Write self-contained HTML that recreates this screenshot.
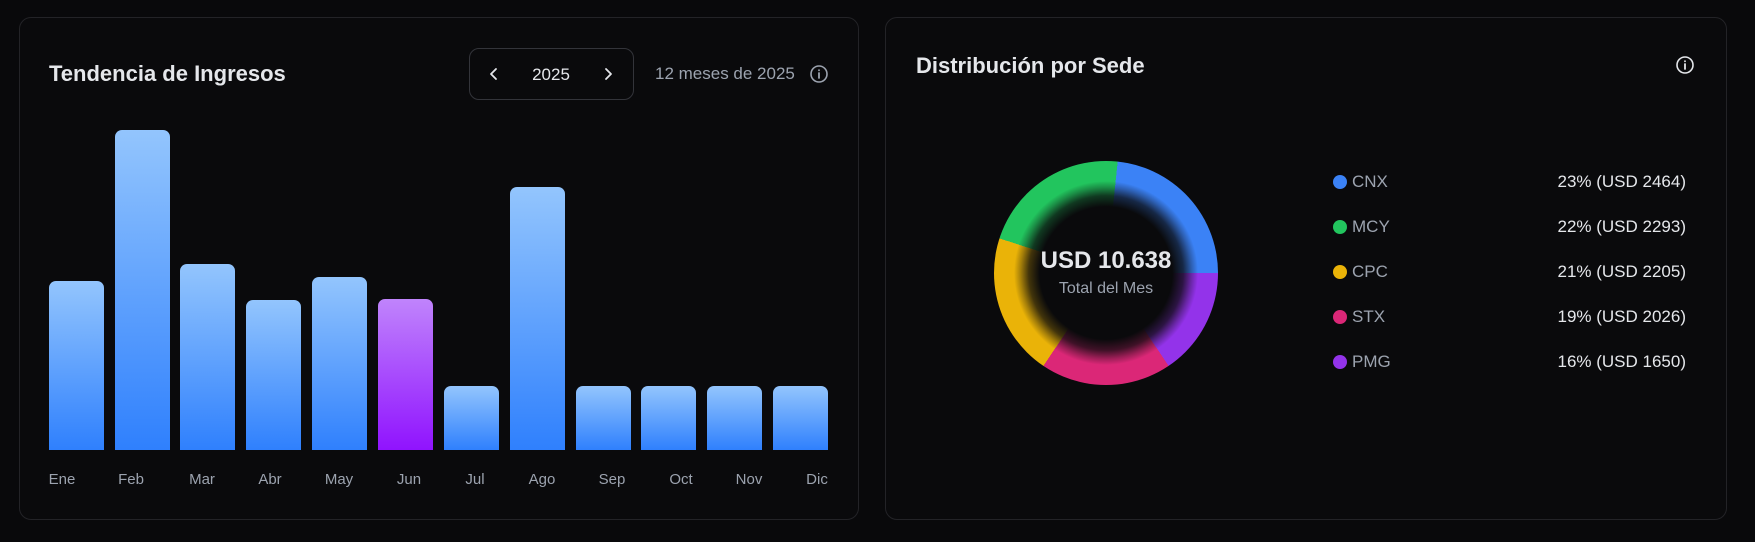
<!DOCTYPE html>
<html><head><meta charset="utf-8"><style>
*{box-sizing:border-box;margin:0;padding:0}
body{width:1755px;height:542px;background:#09090b;font-family:"Liberation Sans",sans-serif;position:relative;overflow:hidden;color:#e5e7eb}
.card{position:absolute;top:17px;height:503px;border:1px solid #232327;border-radius:12px;background:#0a0a0c}
.t{position:absolute;font-weight:bold;font-size:22px;color:#e5e7eb}
.bar{position:absolute;width:55px;border-radius:7px 7px 0 0;background:linear-gradient(#93c5fd,#2f80fd)}
.lbl{position:absolute;top:471px;font-size:15px;color:#9ca3af;width:60px;text-align:center}
.row{position:absolute;left:1333px;width:353px;height:20px;font-size:17px}
.dot{position:absolute;left:0;top:3px;width:14px;height:14px;border-radius:50%}
.nm{position:absolute;left:19px;top:0;color:#9ca3af}
.val{position:absolute;right:0;top:0;color:#e5e7eb}
</style></head><body>
<div class="card" style="left:19px;width:840px"></div>
<div class="t" style="left:49px;top:61px">Tendencia de Ingresos</div>
<div style="position:absolute;left:469px;top:48px;width:165px;height:52px;border:1px solid #33343a;border-radius:10px"></div>
<svg style="position:absolute;left:487px;top:66px" width="14" height="16" viewBox="0 0 14 16"><path d="M9 3 L4 8 L9 13" fill="none" stroke="#e5e7eb" stroke-width="1.8" stroke-linecap="round" stroke-linejoin="round"/></svg>
<svg style="position:absolute;left:601px;top:66px" width="14" height="16" viewBox="0 0 14 16"><path d="M5 3 L10 8 L5 13" fill="none" stroke="#e5e7eb" stroke-width="1.8" stroke-linecap="round" stroke-linejoin="round"/></svg>
<div style="position:absolute;left:520px;top:65px;width:62px;text-align:center;font-size:17px;color:#e5e7eb">2025</div>
<div style="position:absolute;left:655px;top:64px;font-size:17px;color:#9ca3af">12 meses de 2025</div>
<svg style="position:absolute;left:809px;top:64px" width="20" height="20" viewBox="0 0 20 20"><circle cx="10" cy="10" r="8" fill="none" stroke="#9ca3af" stroke-width="1.6"/><path d="M10 9v5M10 6.2v.2" stroke="#9ca3af" stroke-width="1.8" stroke-linecap="round"/></svg>

<div class="bar" style="left:49px;top:281px;height:169px"></div>
<div class="bar" style="left:115px;top:130px;height:320px"></div>
<div class="bar" style="left:180px;top:264px;height:186px"></div>
<div class="bar" style="left:246px;top:300px;height:150px"></div>
<div class="bar" style="left:312px;top:277px;height:173px"></div>
<div class="bar" style="left:378px;top:299px;height:151px;background:linear-gradient(#c084fc,#9013fe)"></div>
<div class="bar" style="left:444px;top:386px;height:64px"></div>
<div class="bar" style="left:510px;top:187px;height:263px"></div>
<div class="bar" style="left:576px;top:386px;height:64px"></div>
<div class="bar" style="left:641px;top:386px;height:64px"></div>
<div class="bar" style="left:707px;top:386px;height:64px"></div>
<div class="bar" style="left:773px;top:386px;height:64px"></div>

<div class="lbl" style="left:32px">Ene</div>
<div class="lbl" style="left:101px">Feb</div>
<div class="lbl" style="left:172px">Mar</div>
<div class="lbl" style="left:240px">Abr</div>
<div class="lbl" style="left:309px">May</div>
<div class="lbl" style="left:379px">Jun</div>
<div class="lbl" style="left:445px">Jul</div>
<div class="lbl" style="left:512px">Ago</div>
<div class="lbl" style="left:582px">Sep</div>
<div class="lbl" style="left:651px">Oct</div>
<div class="lbl" style="left:719px">Nov</div>
<div class="lbl" style="left:787px">Dic</div>

<div class="card" style="left:885px;width:842px"></div>
<div class="t" style="left:916px;top:53px">Distribución por Sede</div>
<svg style="position:absolute;left:1675px;top:55px" width="20" height="20" viewBox="0 0 20 20"><circle cx="10" cy="10" r="8" fill="none" stroke="#e5e7eb" stroke-width="1.6"/><path d="M10 9v5M10 6.2v.2" stroke="#e5e7eb" stroke-width="1.8" stroke-linecap="round"/></svg>

<div style="position:absolute;left:994px;top:161px;width:224px;height:224px;border-radius:50%;background:conic-gradient(from 6deg,#3b82f6 0 84deg,#9333ea 84deg 140deg,#db2777 140deg 208deg,#eab308 208deg 282deg,#22c55e 282deg 360deg)"></div>
<div style="position:absolute;left:1014px;top:181px;width:184px;height:184px;border-radius:50%;background:radial-gradient(circle closest-side,#0a0a0c 0,#0a0a0c 72%,rgba(10,10,12,0.75) 84%,rgba(10,10,12,0.3) 93%,rgba(10,10,12,0) 100%)"></div>
<div style="position:absolute;left:1006px;top:247px;width:200px;text-align:center;font-size:24px;font-weight:bold;color:#e5e7eb">USD 10.638</div>
<div style="position:absolute;left:1006px;top:280px;width:200px;text-align:center;font-size:16px;color:#9ca3af">Total del Mes</div>

<div class="row" style="top:172px"><span class="dot" style="background:#3b82f6"></span><span class="nm">CNX</span><span class="val">23% (USD 2464)</span></div>
<div class="row" style="top:217px"><span class="dot" style="background:#22c55e"></span><span class="nm">MCY</span><span class="val">22% (USD 2293)</span></div>
<div class="row" style="top:262px"><span class="dot" style="background:#eab308"></span><span class="nm">CPC</span><span class="val">21% (USD 2205)</span></div>
<div class="row" style="top:307px"><span class="dot" style="background:#db2777"></span><span class="nm">STX</span><span class="val">19% (USD 2026)</span></div>
<div class="row" style="top:352px"><span class="dot" style="background:#9333ea"></span><span class="nm">PMG</span><span class="val">16% (USD 1650)</span></div>
</body></html>
